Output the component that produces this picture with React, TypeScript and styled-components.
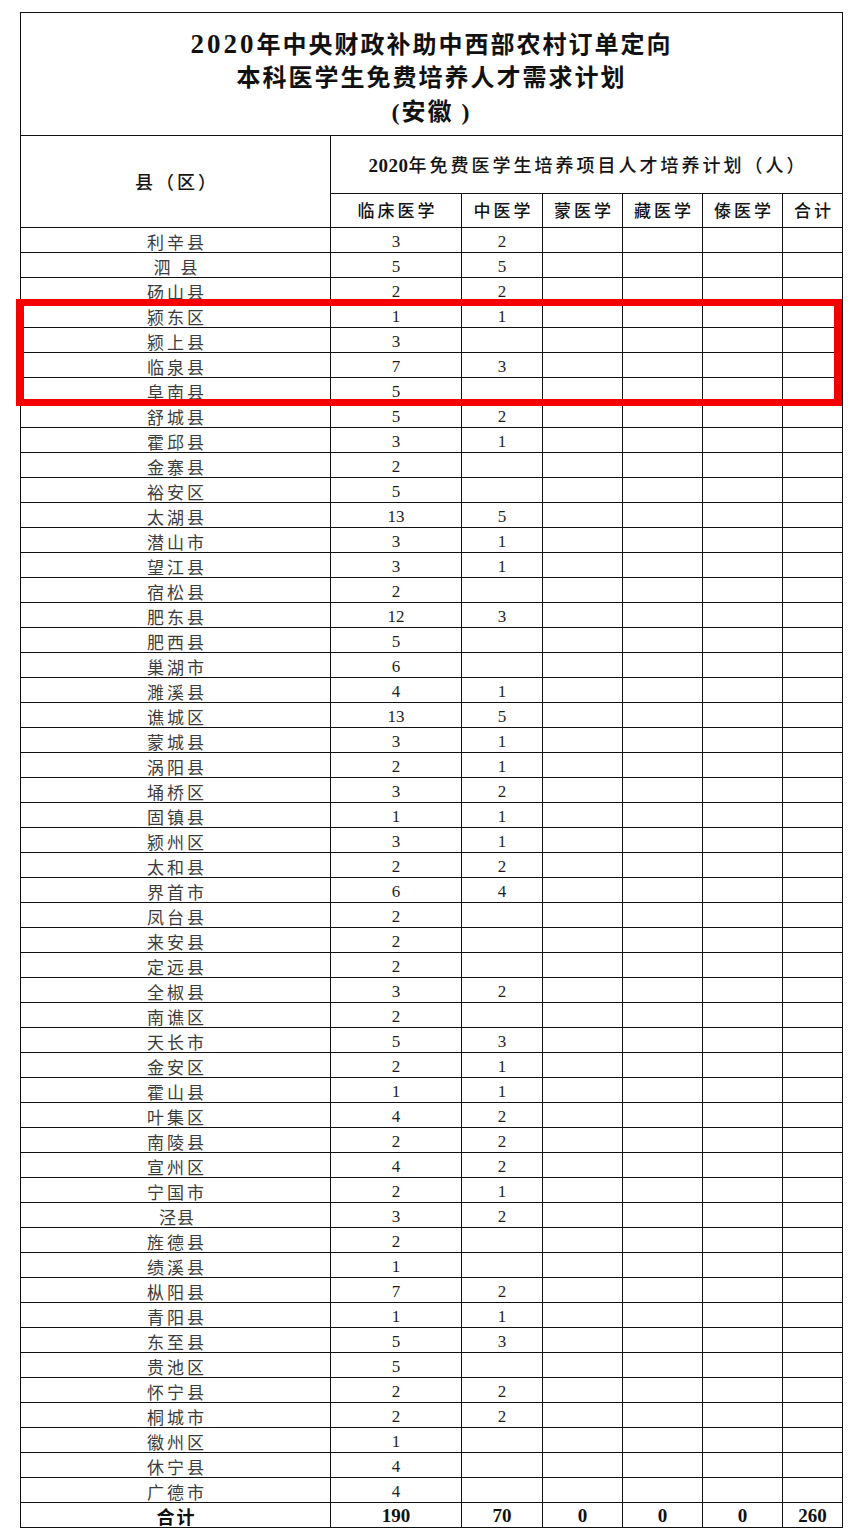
import React from "react";
import styled, { createGlobalStyle } from "styled-components";

const GlobalStyle = createGlobalStyle`
  html, body { margin: 0; padding: 0; background: #ffffff; }
  body { font-family: "Noto Sans CJK SC", "Noto Sans", sans-serif; }
`;

const CJK = `"Liberation Serif", "Noto Sans CJK SC", serif`;

const Page = styled.div`
  padding: 12px 0 10px 20px;
`;

const Frame = styled.div`
  position: relative;
  width: 822px;
`;

const Table = styled.table`
  width: 822px;
  border-collapse: collapse;
  table-layout: fixed;
  td {
    border: 1px solid #111;
    padding: 0;
    text-align: center;
    vertical-align: middle;
    white-space: nowrap;
  }
`;

const TitleRow = styled.tr`
  height: 123px;
`;

const TitleCell = styled.td`
  && {
    vertical-align: top;
    padding-top: 14px;
  }
  font-family: ${CJK};
  font-weight: 700;
  font-size: 24px;
  line-height: 34px;
  letter-spacing: 2px;
  color: #111;
`;

const TitleLine = styled.div`
  height: 34px;
`;

const TitleNum = styled.span`
  font-family: "Liberation Serif", serif;
  font-size: 27px;
  letter-spacing: 3px;
`;

const HeadRow = styled.tr<{ $h: number }>`
  height: ${(p) => p.$h}px;
`;

const HeadCell = styled.td`
  font-family: ${CJK};
  font-weight: 500;
  font-size: 18px;
  line-height: 22px;
  letter-spacing: 3px;
  color: #141414;
  && {
    padding-top: 2px;
    padding-left: 3px;
  }
`;

const HeadNum = styled.span`
  font-family: "Liberation Serif", serif;
  font-weight: 700;
  font-size: 19px;
  letter-spacing: 0.5px;
`;

const SubHeadCell = styled.td`
  font-family: ${CJK};
  font-weight: 500;
  font-size: 17px;
  line-height: 22px;
  letter-spacing: 3px;
  color: #141414;
  && {
    padding-top: 2px;
    padding-left: 3px;
  }
`;

const DataRow = styled.tr`
  height: 25px;
`;

const NameCell = styled.td<{ $tight?: boolean }>`
  font-family: "Noto Sans CJK SC", sans-serif;
  font-weight: 400;
  font-size: 17px;
  line-height: 20px;
  letter-spacing: ${(p) => (p.$tight ? "1px" : "3px")};
  color: #3c3c3c;
  && {
    padding-top: 3px;
    padding-left: 3px;
  }
`;

const NumCell = styled.td`
  font-family: "Liberation Serif", serif;
  font-size: 17px;
  line-height: 20px;
  color: #1e1e1e;
  && {
    padding-top: 3px;
  }
`;

const TotalLabel = styled.td`
  font-family: "Noto Sans CJK SC", sans-serif;
  font-weight: 700;
  font-size: 18px;
  line-height: 22px;
  letter-spacing: 2px;
  color: #111;
  && {
    padding-top: 1px;
    padding-left: 2px;
  }
`;

const TotalNum = styled.td`
  font-family: "Liberation Serif", serif;
  font-weight: 700;
  font-size: 19px;
  line-height: 22px;
  color: #111;
  && {
    padding-top: 2px;
  }
`;

const Highlight = styled.div`
  position: absolute;
  left: -4px;
  top: 287px;
  width: 826px;
  height: 107px;
  box-sizing: border-box;
  border: 8px solid #f40000;
  border-top-width: 7px;
  border-bottom-width: 7px;
  pointer-events: none;
`;

type Row = [string, number | "", number | ""];

const rows: Row[] = [
  ["利辛县", 3, 2],
  ["泗 县", 5, 5],
  ["砀山县", 2, 2],
  ["颍东区", 1, 1],
  ["颍上县", 3, ""],
  ["临泉县", 7, 3],
  ["阜南县", 5, ""],
  ["舒城县", 5, 2],
  ["霍邱县", 3, 1],
  ["金寨县", 2, ""],
  ["裕安区", 5, ""],
  ["太湖县", 13, 5],
  ["潜山市", 3, 1],
  ["望江县", 3, 1],
  ["宿松县", 2, ""],
  ["肥东县", 12, 3],
  ["肥西县", 5, ""],
  ["巢湖市", 6, ""],
  ["濉溪县", 4, 1],
  ["谯城区", 13, 5],
  ["蒙城县", 3, 1],
  ["涡阳县", 2, 1],
  ["埇桥区", 3, 2],
  ["固镇县", 1, 1],
  ["颍州区", 3, 1],
  ["太和县", 2, 2],
  ["界首市", 6, 4],
  ["凤台县", 2, ""],
  ["来安县", 2, ""],
  ["定远县", 2, ""],
  ["全椒县", 3, 2],
  ["南谯区", 2, ""],
  ["天长市", 5, 3],
  ["金安区", 2, 1],
  ["霍山县", 1, 1],
  ["叶集区", 4, 2],
  ["南陵县", 2, 2],
  ["宣州区", 4, 2],
  ["宁国市", 2, 1],
  ["泾县", 3, 2],
  ["旌德县", 2, ""],
  ["绩溪县", 1, ""],
  ["枞阳县", 7, 2],
  ["青阳县", 1, 1],
  ["东至县", 5, 3],
  ["贵池区", 5, ""],
  ["怀宁县", 2, 2],
  ["桐城市", 2, 2],
  ["徽州区", 1, ""],
  ["休宁县", 4, ""],
  ["广德市", 4, ""],
];

const colWidths = [310, 131, 81, 80, 80, 80, 60];
const subHeads = ["临床医学", "中医学", "蒙医学", "藏医学", "傣医学", "合计"];

export default function App() {
  const sumA = rows.reduce((s, r) => s + (r[1] === "" ? 0 : r[1]), 0);
  const sumB = rows.reduce((s, r) => s + (r[2] === "" ? 0 : r[2]), 0);
  return (
    <>
      <GlobalStyle />
      <Page>
        <Frame>
          <Table>
            <colgroup>
              {colWidths.map((w, i) => (
                <col key={i} style={{ width: w }} />
              ))}
            </colgroup>
            <tbody>
              <TitleRow>
                <TitleCell colSpan={7}>
                  <TitleLine>
                    <TitleNum>2020</TitleNum>年中央财政补助中西部农村订单定向
                  </TitleLine>
                  <TitleLine>本科医学生免费培养人才需求计划</TitleLine>
                  <TitleLine>(安徽 )</TitleLine>
                </TitleCell>
              </TitleRow>
              <HeadRow $h={58}>
                <HeadCell rowSpan={2}>县（区）</HeadCell>
                <HeadCell colSpan={6}>
                  <HeadNum>2020</HeadNum>年免费医学生培养项目人才培养计划（人）
                </HeadCell>
              </HeadRow>
              <HeadRow $h={34}>
                {subHeads.map((h) => (
                  <SubHeadCell key={h}>{h}</SubHeadCell>
                ))}
              </HeadRow>
              {rows.map(([name, a, b]) => (
                <DataRow key={name}>
                  <NameCell $tight={name === "泾县"}>{name}</NameCell>
                  <NumCell>{a}</NumCell>
                  <NumCell>{b}</NumCell>
                  <NumCell />
                  <NumCell />
                  <NumCell />
                  <NumCell />
                </DataRow>
              ))}
              <DataRow>
                <TotalLabel>合计</TotalLabel>
                <TotalNum>{sumA}</TotalNum>
                <TotalNum>{sumB}</TotalNum>
                <TotalNum>0</TotalNum>
                <TotalNum>0</TotalNum>
                <TotalNum>0</TotalNum>
                <TotalNum>{sumA + sumB}</TotalNum>
              </DataRow>
            </tbody>
          </Table>
          <Highlight />
        </Frame>
      </Page>
    </>
  );
}
